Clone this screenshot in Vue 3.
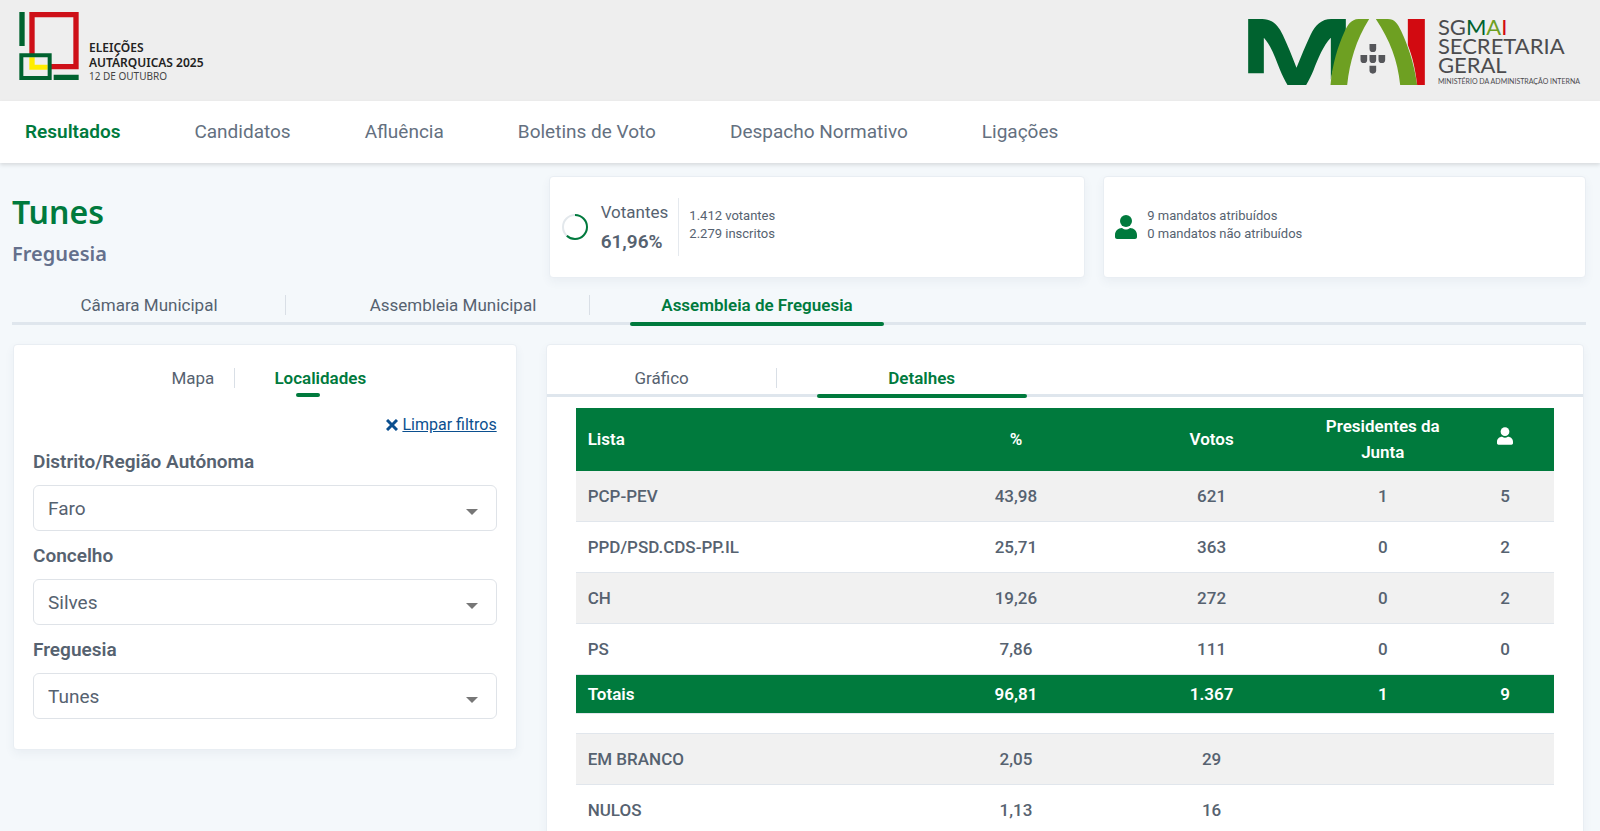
<template>
  <div class="page">
    <header class="banner">
      <a class="brand" href="#">
        <svg class="brand-mark" viewBox="57 36 178 204" aria-hidden="true">
          <path fill="#00622f" d="M57 36h16v102H57zM160 224h75v16h-75z" />
          <path fill="none" stroke="#ce1018" stroke-width="16" d="M95 44h132v156H95z" />
          <path fill="#eee" d="M63 166h85v68H63z" />
          <path fill="#ffed00" d="M87 172h16v22h39v15H87z" />
          <path fill="none" stroke="#00622f" stroke-width="12" d="M63 166h85v68H63z" />
        </svg>
        <span class="brand-text">
          <strong>ELEIÇÕES</strong>
          <strong>AUTÁRQUICAS 2025</strong>
          <span>12 DE OUTUBRO</span>
        </span>
      </a>
      <a class="ministry" href="#">
        <svg class="ministry-mark" viewBox="50 56 530 198" aria-hidden="true">
          <path fill="#00622f" d="M50 56h42c30 0 48 18 62 48 14 30 28 64 41 98 14-34 28-68 42-98 14-30 34-48 62-48h44v60c-20 34-36 76-45 122V112c-22 22-38 62-52 98-6 14-14 31-22 44h-56c-8-13-16-30-22-44-14-36-28-76-49-98v107H50z" />
          <path fill="#6ea022" d="M413 56h-32c-22 0-34 20-42 38-20 44-36 94-42 160h50c8-70 26-134 66-198zM433 56h36c20 0 30 14 40 36 20 44 38 92 48 162h-51c-8-76-30-132-73-198z" />
          <path fill="#d20a11" d="M529 56h51v198h-23c-6-50-14-84-28-120z" />
          <path v-for="s in shields" :key="s" fill="#55565a" :d="s" />
        </svg>
        <span class="ministry-text">
          <span class="ministry-line">SG<b class="m">M</b><b class="a">A</b><b class="i">I</b></span>
          <span class="ministry-line">SECRETARIA</span>
          <span class="ministry-line">GERAL</span>
          <small>MINISTÉRIO DA ADMINISTRAÇÃO INTERNA</small>
        </span>
      </a>
    </header>

    <nav class="main-nav">
      <a v-for="(item, i) in menu" :key="item" href="#" :class="{ active: i === 0 }">{{ item }}</a>
    </nav>

    <main class="content">
      <section class="summary">
        <div class="place">
          <h1>Tunes</h1>
          <h2>Freguesia</h2>
        </div>
        <div class="card stat">
          <svg class="ring" viewBox="0 0 28 28" aria-hidden="true">
            <circle cx="14" cy="14" r="12" stroke="#e3e8ec" />
            <circle cx="14" cy="14" r="12" stroke="#007a3d" pathLength="100" stroke-dasharray="61.96 100" transform="rotate(-90 14 14)" />
          </svg>
          <div class="turnout">
            <span>Votantes</span>
            <strong>61,96%</strong>
          </div>
          <p class="figures bordered">1.412 votantes<br>2.279 inscritos</p>
        </div>
        <div class="card stat">
          <svg class="person" viewBox="0 0 22 24" aria-hidden="true">
            <circle cx="11" cy="6" r="6" />
            <path d="M7 13c3 2 5 2 8 0 4 0 7 3 7 7v2c0 1-1 2-2 2H2c-1 0-2-1-2-2v-2c0-4 3-7 7-7z" />
          </svg>
          <p class="figures">9 mandatos atribuídos<br>0 mandatos não atribuídos</p>
        </div>
      </section>

      <div class="tabs organ-tabs">
        <button
          v-for="tab in organs"
          :key="tab"
          type="button"
          :class="{ active: tab === organ }"
          @click="organ = tab"
        >{{ tab }}</button>
      </div>

      <section class="panels">
        <form class="card filters" @submit.prevent>
          <div class="filter-tabs">
            <button type="button">Mapa</button>
            <button type="button" class="active">Localidades</button>
          </div>
          <div class="clear">
            <svg viewBox="0 0 12 12" aria-hidden="true"><path d="M1 1l10 10M11 1L1 11" /></svg>
            <a href="#">Limpar filtros</a>
          </div>
          <div v-for="f in filters" :key="f.id" class="field">
            <label :for="f.id">{{ f.label }}</label>
            <div class="select-wrap">
              <select :id="f.id" v-model="f.value">
                <option>{{ f.value }}</option>
              </select>
              <svg viewBox="0 0 12 6" aria-hidden="true"><path d="M0 0h12L6 6z" /></svg>
            </div>
          </div>
        </form>

        <div class="card results">
          <div class="tabs result-tabs">
            <button
              v-for="tab in views"
              :key="tab"
              type="button"
              :class="{ active: tab === view }"
              @click="view = tab"
            >{{ tab }}</button>
          </div>
          <div class="table-wrap">
            <table>
              <colgroup>
                <col class="c-list"><col class="c-num"><col class="c-num"><col class="c-pres"><col class="c-seats">
              </colgroup>
              <thead>
                <tr>
                  <th scope="col">Lista</th>
                  <th scope="col">%</th>
                  <th scope="col">Votos</th>
                  <th scope="col">Presidentes da Junta</th>
                  <th scope="col" aria-label="Mandatos">
                    <svg class="person-small" viewBox="0 0 22 24" aria-hidden="true">
                      <circle cx="11" cy="6" r="6" />
                      <path d="M7 13c3 2 5 2 8 0 4 0 7 3 7 7v2c0 1-1 2-2 2H2c-1 0-2-1-2-2v-2c0-4 3-7 7-7z" />
                    </svg>
                  </th>
                </tr>
              </thead>
              <tbody>
                <tr v-for="(row, i) in lists" :key="row[0]" :class="{ striped: i % 2 === 0 }">
                  <td v-for="(cell, c) in row" :key="c">{{ cell }}</td>
                </tr>
                <tr class="totals">
                  <td v-for="(cell, c) in totals" :key="c">{{ cell }}</td>
                </tr>
                <tr class="spacer"><td colspan="5"></td></tr>
                <tr v-for="(row, i) in others" :key="row[0]" :class="{ striped: i % 2 === 0 }">
                  <td v-for="(cell, c) in row" :key="c">{{ cell }}</td>
                </tr>
              </tbody>
            </table>
          </div>
        </div>
      </section>
    </main>
  </div>
</template>

<script setup>
import { ref } from 'vue';

const menu = ['Resultados', 'Candidatos', 'Afluência', 'Boletins de Voto', 'Despacho Normativo', 'Ligações'];

const organs = ['Câmara Municipal', 'Assembleia Municipal', 'Assembleia de Freguesia'];
const organ = ref('Assembleia de Freguesia');

const views = ['Gráfico', 'Detalhes'];
const view = ref('Detalhes');

const filters = ref([
  { id: 'distrito', label: 'Distrito/Região Autónoma', value: 'Faro' },
  { id: 'concelho', label: 'Concelho', value: 'Silves' },
  { id: 'freguesia', label: 'Freguesia', value: 'Tunes' },
]);

const lists = [
  ['PCP-PEV', '43,98', '621', '1', '5'],
  ['PPD/PSD.CDS-PP.IL', '25,71', '363', '0', '2'],
  ['CH', '19,26', '272', '0', '2'],
  ['PS', '7,86', '111', '0', '0'],
];
const totals = ['Totais', '96,81', '1.367', '1', '9'];
const others = [
  ['EM BRANCO', '2,05', '29', '', ''],
  ['NULOS', '1,13', '16', '', ''],
];

// five small shields arranged in a cross
const shields = [[414, 131], [387, 164], [414, 164], [441, 164], [414, 196]].map(
  ([x, y]) => `M${x} ${y}h20v14q0 10-10 10t-10-10z`
);
</script>

<style>
body {
  margin: 0;
  background: #f4f8fb;
}
</style>

<style scoped>
.page {
  height: 100vh;
  overflow: hidden;
  color: #566270;
  font-family: Roboto, "Liberation Sans", sans-serif;
  font-size: 17px;
}

button, select {
  font: inherit;
  color: inherit;
}

button {
  padding: 0;
  background: none;
  border: none;
  cursor: pointer;
}

/* cabeçalho */
.banner {
  display: flex;
  justify-content: space-between;
  align-items: flex-start;
  box-sizing: border-box;
  height: 101px;
  padding: 12px 20px 0 19px;
  background: #eee;
}

.banner a {
  display: flex;
  text-decoration: none;
}

.brand { gap: 10px; }

.brand-mark {
  width: 60px;
  height: 68px;
}

.brand-text {
  display: flex;
  flex-direction: column;
  padding-top: 28px;
  color: #222;
  font-family: "Noto Sans", sans-serif;
  font-size: 12px;
  line-height: 15px;
}
.brand-text strong { font-weight: 600; }
.brand-text span {
  color: #444;
  font-size: 10px;
  line-height: 12px;
}

.ministry { gap: 13px; }

.ministry-mark {
  width: 177px;
  height: 66px;
  margin-top: 7px;
}

.ministry-text {
  display: flex;
  flex-direction: column;
  padding-top: 5px;
  color: #4c4c4e;
  font-family: Lato, sans-serif;
  white-space: nowrap;
}
.ministry-line {
  font-size: 22px;
  line-height: 19px;
}
.ministry-line b { font-weight: 400; }
.ministry-line .m { color: #00622f; }
.ministry-line .a { color: #6ea022; }
.ministry-line .i { color: #d20a11; }
.ministry-text small {
  font-size: 7px;
  line-height: 14px;
}

/* menu */
.main-nav {
  position: relative;
  display: flex;
  gap: 74px;
  padding: 0 25px;
  background: #fff;
  box-shadow: 0 2px 4px rgba(0, 0, 0, 0.12);
  font-size: 19px;
  line-height: 62px;
}
.main-nav a {
  color: #647080;
  text-decoration: none;
}
.main-nav a.active {
  color: #007a3d;
  font-weight: 600;
}

.content { padding: 13px 14px 0 12px; }

.card {
  box-sizing: border-box;
  background: #fff;
  border: 1px solid #e9eef3;
  border-radius: 4px;
  box-shadow: 0 4px 10px rgba(60, 90, 120, 0.06);
}

.summary {
  display: grid;
  grid-template-columns: 519fr 537fr 483fr;
  gap: 18px;
}

.place { padding-top: 14px; }
.place h1, .place h2 {
  margin: 0;
  font-family: "Noto Sans", sans-serif;
  font-weight: 600;
}
.place h1 {
  color: #007a3d;
  font-size: 32px;
  line-height: 44px;
}
.place h2 {
  color: #64708c;
  font-size: 20px;
  line-height: 40px;
}

.stat {
  display: flex;
  align-items: center;
  height: 102px;
  padding: 0 11px;
}

.ring {
  width: 28px;
  height: 28px;
  fill: none;
  stroke-width: 2;
}

.turnout {
  display: flex;
  flex-direction: column;
  padding: 0 10px 0 12px;
  font-size: 17px;
  line-height: 29px;
}
.turnout strong {
  font-size: 19px;
  font-weight: 600;
}

.figures {
  margin: 0;
  padding: 0 10px 4px;
  font-size: 13px;
  line-height: 18px;
}
.figures.bordered {
  padding: 9px 10px 13px;
  border-left: 1px solid #e5e9ee;
}

.person {
  width: 22px;
  height: 24px;
  fill: #007a3d;
}

/* separadores */
.tabs {
  display: flex;
  gap: 30px;
  border-bottom: 3px solid #dfe6ed;
}
.tabs button {
  position: relative;
  line-height: 20px;
}
.tabs button.active, .filter-tabs .active {
  color: #007a3d;
  font-weight: 600;
}
.tabs button:not(.active)::before {
  content: '';
  position: absolute;
  top: 0;
  right: 0;
  width: 1px;
  height: 20px;
  background: #d9dfe6;
}
.tabs button.active::after {
  content: '';
  position: absolute;
  left: 10px;
  right: 10px;
  bottom: -4px;
  height: 4px;
  border-radius: 2px;
  background: #007a3d;
}

.organ-tabs { margin-top: 17px; }
.organ-tabs button {
  width: 274px;
  padding-bottom: 7px;
}

.panels {
  display: grid;
  grid-template-columns: 504fr 1039fr;
  gap: 29px;
  align-items: start;
  padding: 19px 2px 0 1px;
}

.filters { padding: 23px 19px 30px; }

.filter-tabs {
  display: flex;
  justify-content: center;
  line-height: 20px;
}
.filter-tabs button {
  position: relative;
  padding: 0 20px;
}
.filter-tabs button:first-child {
  padding-left: 28px;
  border-right: 1px solid #d9dfe6;
}
.filter-tabs button:last-child { padding-left: 39px; }
.filter-tabs .active::after {
  content: '';
  position: absolute;
  left: 61px;
  bottom: -9px;
  width: 24px;
  height: 4px;
  border-radius: 2px;
  background: #007a3d;
}

.clear {
  display: flex;
  justify-content: flex-end;
  align-items: center;
  gap: 4px;
  margin: 27px 0 2px;
  font-size: 16px;
  line-height: 20px;
}
.clear a { color: #0b4f8f; }
.clear svg {
  width: 12px;
  height: 12px;
  fill: none;
  stroke: #0b4f8f;
  stroke-width: 3;
}

.field {
  padding-top: 12px;
  font-size: 19px;
}
.field label {
  display: block;
  font-weight: 600;
  line-height: 26px;
}
.select-wrap {
  position: relative;
  margin-top: 10px;
}
.select-wrap select {
  display: block;
  width: 100%;
  height: 46px;
  padding: 0 40px 0 14px;
  appearance: none;
  background: #fff;
  border: 1px solid #dfe3e8;
  border-radius: 6px;
}
.select-wrap svg {
  position: absolute;
  top: 24px;
  right: 19px;
  width: 12px;
  height: 6px;
  fill: #777;
  pointer-events: none;
}

.result-tabs { padding-top: 23px; }
.result-tabs button {
  width: 230px;
  padding-bottom: 6px;
}

.table-wrap { padding: 11px 29px 0; }

table {
  width: 100%;
  border-collapse: collapse;
  table-layout: fixed;
  line-height: 26px;
}
.c-list { width: 35%; }
.c-num { width: 20%; }
.c-pres { width: 15%; }
.c-seats { width: 10%; }

th, td {
  padding: 12px;
  text-align: center;
  font-weight: 500;
}
th:first-child, td:first-child { text-align: left; }
th {
  padding: 5px 12px 6px;
  color: #fff;
  background: #007a3d;
  font-weight: 600;
}
tbody tr { border-bottom: 1px solid #e1e6ec; }
.striped { background: #f1f1f1; }
.totals {
  color: #fff;
  background: #007a3d;
}
.totals td {
  padding: 6px 12px;
  font-weight: 600;
}
.spacer td {
  height: 19px;
  padding: 0;
}

.person-small {
  width: 16px;
  height: 18px;
  fill: #fff;
}
</style>
